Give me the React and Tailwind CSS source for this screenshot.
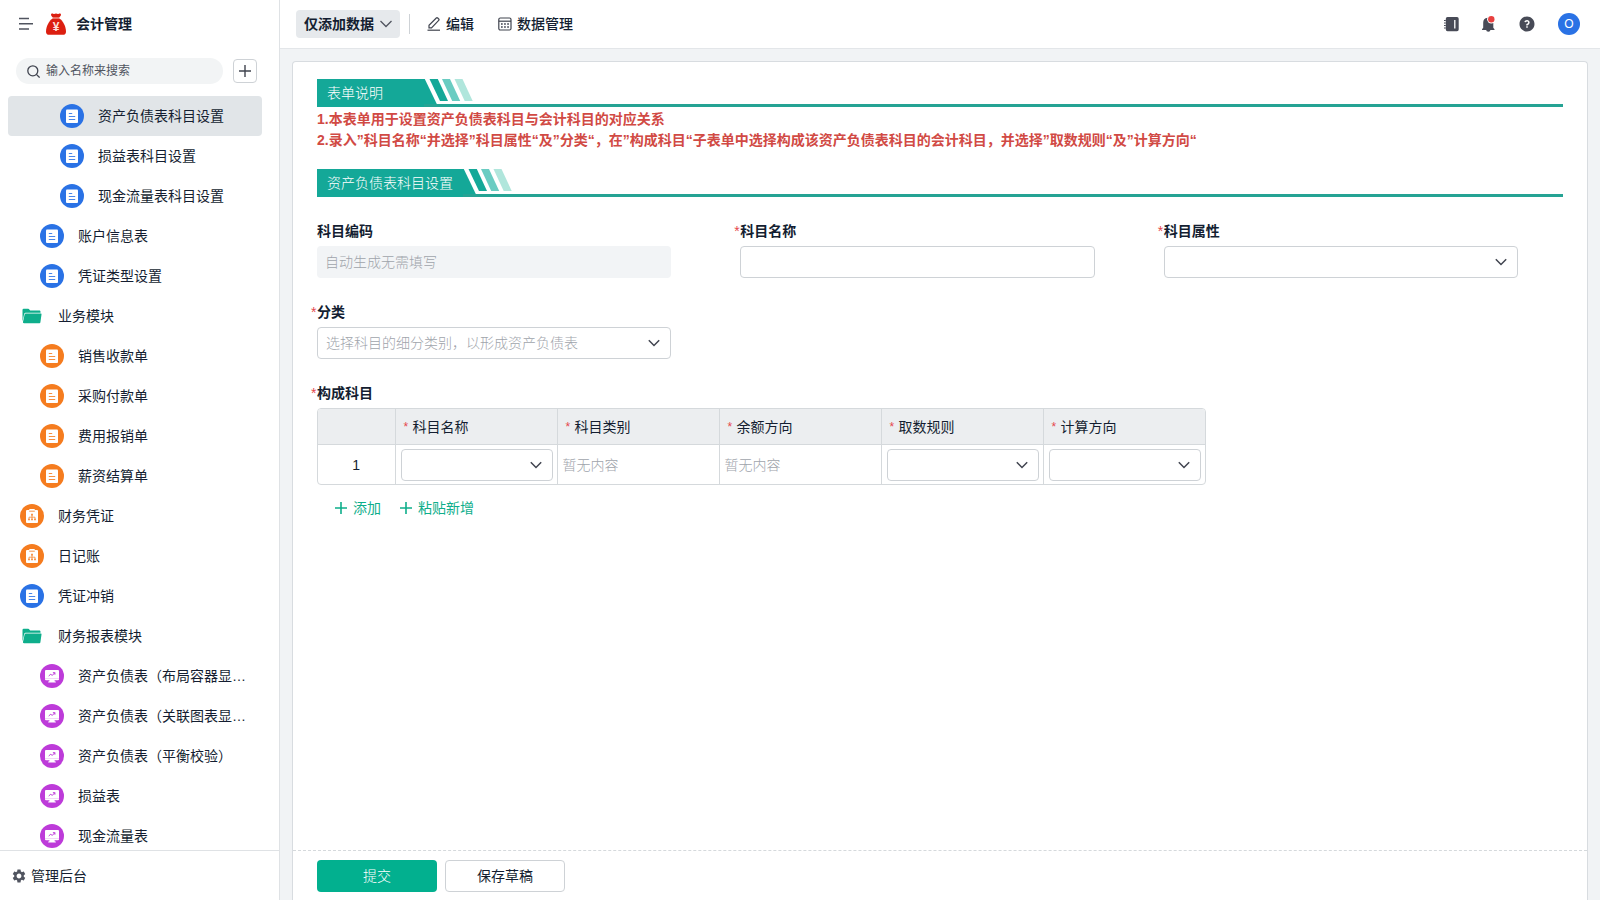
import React, { useState } from 'react';
import { RiQuestionFill } from 'react-icons/ri';
import { MdSettings } from 'react-icons/md';

const menuItems = [
    { label: '资产负债表科目设置', icon: 'form', color: 'bg-[#2a72e5]', level: 3 },
    { label: '损益表科目设置', icon: 'form', color: 'bg-[#2a72e5]', level: 3 },
    { label: '现金流量表科目设置', icon: 'form', color: 'bg-[#2a72e5]', level: 3 },
    { label: '账户信息表', icon: 'form', color: 'bg-[#2a72e5]', level: 2 },
    { label: '凭证类型设置', icon: 'form', color: 'bg-[#2a72e5]', level: 2 },
    { label: '业务模块', icon: 'folder', level: 1 },
    { label: '销售收款单', icon: 'form', color: 'bg-[#f57c1f]', level: 2 },
    { label: '采购付款单', icon: 'form', color: 'bg-[#f57c1f]', level: 2 },
    { label: '费用报销单', icon: 'form', color: 'bg-[#f57c1f]', level: 2 },
    { label: '薪资结算单', icon: 'form', color: 'bg-[#f57c1f]', level: 2 },
    { label: '财务凭证', icon: 'flow', color: 'bg-[#f57c1f]', level: 1 },
    { label: '日记账', icon: 'flow', color: 'bg-[#f57c1f]', level: 1 },
    { label: '凭证冲销', icon: 'form', color: 'bg-[#2a72e5]', level: 1 },
    { label: '财务报表模块', icon: 'folder', level: 1 },
    { label: '资产负债表（布局容器显…', icon: 'board', color: 'bg-[#bd3bd9]', level: 2 },
    { label: '资产负债表（关联图表显…', icon: 'board', color: 'bg-[#bd3bd9]', level: 2 },
    { label: '资产负债表（平衡校验）', icon: 'board', color: 'bg-[#bd3bd9]', level: 2 },
    { label: '损益表', icon: 'board', color: 'bg-[#bd3bd9]', level: 2 },
    { label: '现金流量表', icon: 'board', color: 'bg-[#bd3bd9]', level: 2 },
];

const indent = { 1: 'pl-3', 2: 'pl-8', 3: 'pl-[52px]' };

const columns = [
    { title: '科目名称', type: 'select' },
    { title: '科目类别', type: 'empty' },
    { title: '余额方向', type: 'empty' },
    { title: '取数规则', type: 'select' },
    { title: '计算方向', type: 'select' },
];

const FormGlyph = () => (
    <svg width="24" height="24" viewBox="0 0 24 24" fill="none">
        <rect x="6" y="5.5" width="12" height="13.5" rx="1" fill="white" />
        <path d="M8.8 9.5h3.4M8.8 12.500h6.400M8.8 15.500h6.400" stroke="currentColor" strokeWidth="1.2" opacity="0.85" />
    </svg>
);

const FlowGlyph = () => (
    <svg width="24" height="24" viewBox="0 0 24 24" fill="none">
        <path d="M7 6h2.300V5h5.400v1H17a1 1 0 0 1 1 1v11a1 1 0 0 1-1 1H7a1 1 0 0 1-1-1V7a1 1 0 0 1 1-1z" fill="white" />
        <path d="M9.200 7.200h5.600" stroke="currentColor" strokeWidth="0.8" />
        <path d="M12 11v4M9 15v-1.800h6V15" stroke="currentColor" strokeWidth="0.7" />
        <path d="M11.200 9.800h1.600v1.600h-1.600zM8.200 14.700h1.600v1.600H8.200zM11.200 14.700h1.600v1.600h-1.600zM14.200 14.700h1.600v1.600h-1.600z" fill="currentColor" />
    </svg>
);

const BoardGlyph = () => (
    <svg width="24" height="24" viewBox="0 0 24 24" fill="none">
        <path d="M6 6h12a1 1 0 0 1 1 1v8.300a1 1 0 0 1-1 1h-3.500l.3 1.200h1V18.500H8.200v-1h1l.3-1.200H6a1 1 0 0 1-1-1V7a1 1 0 0 1 1-1z" fill="white" />
        <path d="M5 14.500h14" stroke="currentColor" strokeWidth="0.5" opacity="0.4" />
        <path d="M8.700 12l2.100-1.900 1.300 1.400 2.700-2.700M12.900 8.700h2v2" stroke="currentColor" strokeWidth="1" />
    </svg>
);

const FolderGlyph = () => (
    <svg width="24" height="24" viewBox="0 0 24 24">
        <path d="M2.5 17V6a1.2 1.2 0 0 1 1.2-1.2h4.5c.5 0 .8.2 1.1.6l.9 1.1h9c.8 0 1.3.5 1.3 1.2v1H6.3c-1.2 0-1.900.4-2.200 1.500L2.600 17z" fill="#0eae8b" />
        <path d="M5.900 9.600H20.700c.6 0 .9.4.8 1l-1.100 7.600c-.1.7-.6 1.100-1.300 1.100H4c-.8 0-1.200-.4-1-1.200L4.600 10.500c.2-.6.6-.9 1.300-.9z" fill="#0eae8b" />
    </svg>
);

const glyphs = { form: FormGlyph, flow: FlowGlyph, board: BoardGlyph, folder: FolderGlyph };

const glyphColors = {
    'bg-[#2a72e5]': 'text-[#2a72e5]',
    'bg-[#f57c1f]': 'text-[#f57c1f]',
    'bg-[#bd3bd9]': 'text-[#bd3bd9]',
};

const MoneyBag = () => (
    <svg width="20" height="22" viewBox="0 0 20 22" className="shrink-0">
        <path d="M5 1.600C5 .5 6.300.2 7.200.7c.9.5 1.400.3 2.800-.2 1.400.5 1.900.7 2.800.2.9-.5 2.200-.2 2.200.9 0 1.300-1.200 2.400-2 3.200H7C6.200 4 5 2.900 5 1.600z" fill="#dc1f10" />
        <path d="M7 5.200h6c4 2.200 7 8.600 7 13.200 0 2.300-1 3.400-3.300 3.400H3.300C1 21.800 0 20.700 0 18.400 0 13.800 3 7.400 7 5.200z" fill="#dc1f10" />
        <path d="M6.500 5h7" stroke="#f7a79c" strokeWidth="0.7" />
        <text x="10" y="18" textAnchor="middle" fontSize="12" fontWeight="700" fill="#fde3dc" fontFamily="Liberation Sans, sans-serif">¥</text>
    </svg>
);

const Chevron = ({ className }) => (
    <svg width="12" height="8" viewBox="0 0 12 8" fill="none" stroke="currentColor" strokeWidth="1.5" className={className}>
        <path d="M0.800 1.300L6 6.500L11.200 1.300" />
    </svg>
);

const PlusGlyph = ({ strokeWidth = 1.6 }) => (
    <svg width="12" height="12" viewBox="0 0 12 12" fill="none" stroke="currentColor" strokeWidth={strokeWidth}>
        <path d="M6 0v12M0 6h12" />
    </svg>
);

const SectionTitle = ({ children }) => (
    <div className="flex h-7 border-b-[3px] border-[#25a394]">
        <h2 className="flex h-7 min-w-[107px] items-center bg-[#14a898] px-2.5 text-sm font-light text-white">
            {children}
        </h2>
        <svg width="50" height="25" viewBox="0 0 50 25" className="shrink-0">
            <path d="M0 0h0.800L12.800 25H0z" fill="#14a898" />
            <path d="M5.500 0h8.300l10.200 22h-8z" fill="#14a898" />
            <path d="M18 0h8l10.200 22h-8z" fill="#6accc2" />
            <path d="M30.500 0h8l10.200 22h-8z" fill="#b0e6dc" />
        </svg>
    </div>
);

const Label = ({ htmlFor, required, children }) => (
    <label htmlFor={htmlFor} className="-ml-1.5 flex h-[30px] items-center text-sm font-bold">
        <span className="w-1.5 text-sm font-normal text-[#e5484d]">{required ? '*' : ''}</span>
        {children}
    </label>
);

const Select = ({ id, label, placeholder = '' }) => (
    <div className="relative">
        <select
            id={id}
            aria-label={label}
            defaultValue=""
            className="block h-8 w-full appearance-none rounded border border-[#ced2d6] bg-white px-2 text-sm font-light text-[#a0a4ab]"
        >
            <option value="">{placeholder}</option>
        </select>
        <Chevron className="pointer-events-none absolute right-[11px] top-3 text-[#40444f]" />
    </div>
);

const Sidebar = () => {
    const [active, setActive] = useState(0);

    return (
        <aside className="flex w-[280px] shrink-0 flex-col border-r border-[#dfe2e5] bg-white">
            <div className="flex h-12 shrink-0 items-center pl-[19px]">
                <button aria-label="收起菜单" className="text-[#50545f]">
                    <svg width="14" height="14" viewBox="0 0 14 14" fill="none" stroke="currentColor" strokeWidth="1.500">
                        <path d="M0 1.500h10M0 6.700h14M0 12h10" />
                    </svg>
                </button>
                <div className="ml-[13px] flex items-center gap-2.5">
                    <MoneyBag />
                    <h1 className="text-sm font-bold">会计管理</h1>
                </div>
            </div>

            <div className="mt-2.5 flex shrink-0 items-center gap-2.5 pl-4 pr-[22px]">
                <div className="flex h-[26px] flex-1 items-center gap-1.5 rounded-full bg-[#f2f4f5] px-[11px]">
                    <svg width="13" height="13" viewBox="0 0 13 13" fill="none" stroke="#40444f" strokeWidth="1.300" className="shrink-0">
                        <circle cx="5.800" cy="5.800" r="5" />
                        <path d="M9.400 9.400L12.600 12.600" />
                    </svg>
                    <input
                        type="text"
                        aria-label="搜索"
                        placeholder="输入名称来搜索"
                        className="w-full min-w-0 bg-transparent text-xs text-[#141e31] outline-none placeholder:text-[#50545f]"
                    />
                </div>
                <button aria-label="新建" className="flex h-6 w-6 items-center justify-center rounded border border-[#ced2d6] text-[#40444f]">
                    <PlusGlyph strokeWidth={1.4} />
                </button>
            </div>

            <nav className="mt-3 min-h-0 flex-1 overflow-hidden pl-2 pr-[17px]">
                {menuItems.map((item, i) => {
                    const Glyph = glyphs[item.icon];
                    return (
                        <a
                            key={item.label}
                            href="#"
                            onClick={() => setActive(i)}
                            className={`flex h-10 items-center gap-3.5 whitespace-nowrap rounded text-sm ${indent[item.level]} ${i === active ? 'bg-[#e1e5e8]' : 'hover:bg-gray-100'}`}
                        >
                            <span className={`h-6 w-6 shrink-0 rounded-full ${item.color || ''} ${glyphColors[item.color] || ''}`}>
                                <Glyph />
                            </span>
                            <span>{item.label}</span>
                        </a>
                    );
                })}
            </nav>

            <div className="flex h-[50px] shrink-0 items-center border-t border-[#dfe2e5] pl-[11px]">
                <button className="flex items-center gap-1 text-sm">
                    <MdSettings size={16} className="text-[#50545f]" />
                    管理后台
                </button>
            </div>
        </aside>
    );
};

const Header = () => (
    <header className="flex h-[49px] shrink-0 items-center border-b border-[#e3e6e9] bg-white pl-4 pr-5">
        <button className="flex h-7 items-center gap-1.5 rounded bg-[#e6e9ec] px-2 text-sm font-bold">
            仅添加数据
            <svg width="12" height="8" viewBox="0 0 12 8" fill="none" stroke="#50545f" strokeWidth="1.300">
                <path d="M0.500 1L6 6.500L11.500 1" />
            </svg>
        </button>
        <div className="ml-[9px] h-5 w-px bg-[#ced2d6]" />
        <button className="ml-[17px] flex items-center gap-[5px] text-sm font-medium">
            <svg width="14" height="14" viewBox="0 0 14 14" fill="none" stroke="#40444f" strokeWidth="1.200">
                <path d="M2 10.800V8.300L9.300 1a1 1 0 0 1 1.400 0l1 1a1 1 0 0 1 0 1.400L4.500 10.800z" />
                <path d="M0.500 13.200h12.500" />
            </svg>
            编辑
        </button>
        <button className="ml-6 flex items-center gap-[5px] text-sm font-medium">
            <svg width="14" height="14" viewBox="0 0 14 14" fill="none" stroke="#40444f" strokeWidth="1.200">
                <rect x="0.800" y="1" width="12.200" height="12" rx="1.500" />
                <path d="M0.800 4.200h12.200" />
                <path d="M3 7h1.700M6.100 7h1.700M9.200 7h1.700M3 10h1.700M6.100 10h1.700M9.200 10h1.700" strokeWidth="1.600" />
            </svg>
            数据管理
        </button>

        <div className="ml-auto flex items-center gap-[22px] text-[#484b57]">
            <button aria-label="通讯录">
                <svg width="15" height="16" viewBox="0 0 15 16" fill="currentColor">
                    <path d="M3.500 1h9.500A1.700 1.700 0 0 1 14.700 2.700v10.800a1.700 1.700 0 0 1-1.700 1.700h-9.500a1.700 1.700 0 0 1-1.700-1.700V2.700A1.700 1.700 0 0 1 3.500 1z" />
                    <path d="M0 4.500h1.800M0 7h1.800M0 9.500h1.800M0 12h1.800" stroke="currentColor" strokeWidth="1" />
                    <path d="M10.800 4v8.500" stroke="white" strokeWidth="1.300" />
                </svg>
            </button>
            <button aria-label="消息">
                <svg width="15" height="18" viewBox="0 0 15 18" fill="currentColor">
                    <path d="M6.500 2.700h1.500a5 5 0 0 1 4.300 5V12.800l1.200 1.500v.8H1v-.8L2.200 12.800V7.700a5 5 0 0 1 4.300-5z" />
                    <path d="M5.200 15h4.200a2.100 1.800 0 0 1-4.200 0z" />
                    <circle cx="10.300" cy="4.300" r="4.200" fill="white" />
                    <circle cx="10.300" cy="4.300" r="3.200" fill="#e8403f" />
                </svg>
            </button>
            <button aria-label="帮助">
                <RiQuestionFill size={18} />
            </button>
            <button className="flex h-[22px] w-[22px] items-center justify-center rounded-full bg-[#2a72e5] text-xs font-light text-white">
                O
            </button>
        </div>
    </header>
);

const SubTable = () => (
    <div className="w-fit overflow-hidden rounded-sm border border-[#d5d9dc]">
        <table className="table-fixed border-collapse text-left text-sm">
            <thead>
                <tr className="h-[35px] bg-[#eceef0]">
                    <th className="w-[77px]" aria-label="序号"></th>
                    {columns.map((col) => (
                        <th key={col.title} className="w-[162px] border-l border-[#d5d9dc] px-2 pt-0.5 font-normal">
                            <span className="flex items-center gap-[3px]">
                                <span className="w-1.5 text-xs text-[#e5484d]">*</span>
                                {col.title}
                            </span>
                        </th>
                    ))}
                </tr>
            </thead>
            <tbody>
                <tr className="h-10 border-t border-[#d5d9dc]">
                    <td className="pt-0.5 text-center">1</td>
                    {columns.map((col) => (
                        <td key={col.title} className="border-l border-[#d5d9dc] pl-[5px] pr-1 pt-0.5 font-light text-[#a0a4ab]">
                            {col.type === 'select' ? <Select label={col.title} /> : '暂无内容'}
                        </td>
                    ))}
                </tr>
            </tbody>
        </table>
    </div>
);

const App = () => {
    return (
        <div className="flex h-screen bg-[#f1f3f5] font-['Liberation_Sans','Noto_Sans_CJK_SC',sans-serif] text-[#141e31]">
            <Sidebar />

            <div className="flex min-w-0 flex-1 flex-col">
                <Header />

                <main className="mx-3 mt-3 flex min-h-0 flex-1 flex-col rounded-t border border-b-0 border-[#d8dce0] bg-white">
                    <form className="flex min-h-0 flex-1 flex-col" onSubmit={(e) => e.preventDefault()}>
                        <div className="min-h-0 flex-1 overflow-auto pl-6 pt-[17px]">
                            <div className="pr-6">
                                <SectionTitle>表单说明</SectionTitle>
                                <div className="mb-[18px] mt-0.5 text-sm font-bold leading-[21px] text-[#d14a44]">
                                    <p>1.本表单用于设置资产负债表科目与会计科目的对应关系</p>
                                    <p>2.录入”科目名称“并选择”科目属性“及”分类“，在”构成科目“子表单中选择构成该资产负债表科目的会计科目，并选择”取数规则“及”计算方向“</p>
                                </div>
                                <SectionTitle>资产负债表科目设置</SectionTitle>
                            </div>

                            {/* Fields */}
                            <div className="mt-[19px] grid grid-cols-3 gap-y-[19px]">
                                <div className="pr-[69px]">
                                    <Label htmlFor="code">科目编码</Label>
                                    <input
                                        id="code"
                                        type="text"
                                        disabled
                                        placeholder="自动生成无需填写"
                                        className="block h-8 w-full rounded-sm bg-[#f2f4f6] px-2 text-sm font-light placeholder:text-[#a0a4ab]"
                                    />
                                </div>
                                <div className="pr-[69px]">
                                    <Label htmlFor="name" required>科目名称</Label>
                                    <input id="name" type="text" className="block h-8 w-full rounded border border-[#ced2d6] px-2 text-sm" />
                                </div>
                                <div className="pr-[69px]">
                                    <Label htmlFor="attr" required>科目属性</Label>
                                    <Select id="attr" />
                                </div>
                                <div className="pr-[69px]">
                                    <Label htmlFor="category" required>分类</Label>
                                    <Select id="category" placeholder="选择科目的细分类别，以形成资产负债表" />
                                </div>
                                <div className="col-span-3">
                                    <div className="-ml-1.5 flex h-[30px] items-center text-sm font-bold">
                                        <span className="w-1.5 text-sm font-normal text-[#e5484d]">*</span>
                                        构成科目
                                    </div>
                                    <SubTable />
                                    <div className="mt-[13px] flex gap-[19px] pl-[18px] text-sm text-[#0eae8b]">
                                        <button type="button" className="flex items-center gap-1.5">
                                            <PlusGlyph />
                                            添加
                                        </button>
                                        <button type="button" className="flex items-center gap-1.5">
                                            <PlusGlyph />
                                            粘贴新增
                                        </button>
                                    </div>
                                </div>
                            </div>
                        </div>

                        <div className="flex h-[50px] shrink-0 items-center gap-2 border-t border-dashed border-[#d5d9dc] pl-6">
                            <button type="submit" className="h-8 w-[120px] rounded bg-[#02b08f] text-sm font-light text-white">
                                提交
                            </button>
                            <button type="button" className="h-8 w-[120px] rounded border border-[#ced2d6] bg-white text-sm">
                                保存草稿
                            </button>
                        </div>
                    </form>
                </main>
            </div>
        </div>
    );
};

export default App;
